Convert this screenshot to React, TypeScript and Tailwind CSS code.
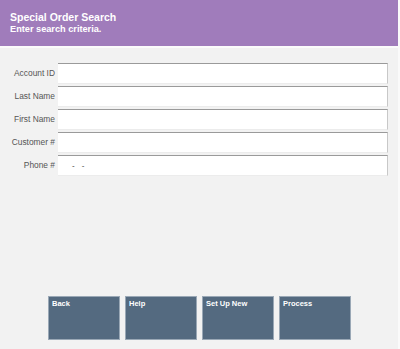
import React from "react";

const fields = ["Account ID", "Last Name", "First Name", "Customer #", "Phone #"];
const buttons = ["Back", "Help", "Set Up New", "Process"];

export default function App() {
  return (
    <div className="w-[400px] h-[349px] flex flex-col bg-[#f2f2f2] font-['Liberation_Sans',Arial,sans-serif] overflow-hidden border-r-2 border-[#fafafa]">
      <div className="h-[46px] bg-[#a07cbb] px-[10px] pt-[11px] text-white font-bold">
        <div className="text-[10.5px] leading-[13px]">Special Order Search</div>
        <div className="text-[9.2px] leading-[11px]">Enter search criteria.</div>
      </div>
      <div className="h-[2px] bg-[#fbfbfb]" />

      <div className="flex flex-col gap-[2px] pt-[15px]">
        {fields.map((f) => (
          <div key={f} className="flex items-center h-[21px]">
            <div className="w-[58px] pr-[3px] text-right text-[8.4px] text-[#555]">{f}</div>
            <div className="w-[330px] h-[21px] bg-white border-t border-t-[#9a9a9a] border-r border-r-[#c8c8c8] border-b border-b-[#ececec] flex items-center pl-[14px] gap-[7px] text-[8px] text-[#333]">
              {f === "Phone #" && (
                <>
                  <span>-</span>
                  <span>-</span>
                </>
              )}
            </div>
          </div>
        ))}
      </div>

      <div className="flex-1" />

      <div className="flex gap-[5px] pl-[48px] pb-[9px]">
        {buttons.map((b) => (
          <div
            key={b}
            className="w-[72px] h-[44px] bg-[#546a80] border border-[#9aa8b6] text-white text-[7.5px] font-bold px-[3px] pt-[2px] leading-[9px]"
          >
            {b}
          </div>
        ))}
      </div>
    </div>
  );
}
